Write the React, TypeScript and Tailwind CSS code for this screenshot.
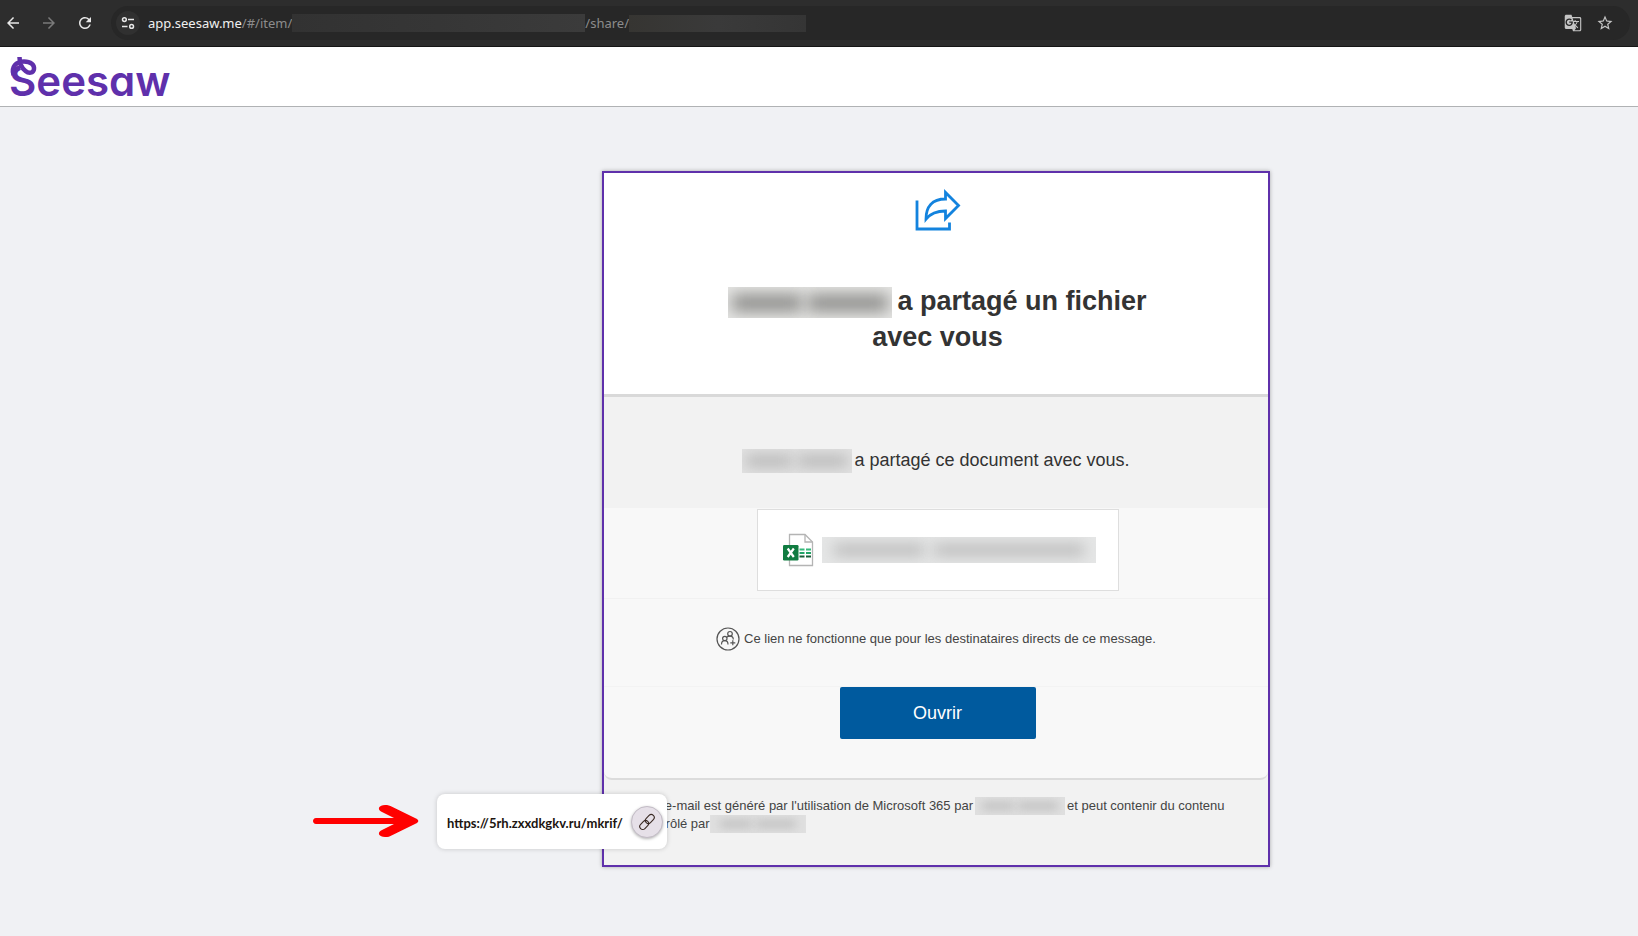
import React from "react";
import {
  MdArrowBack,
  MdArrowForward,
  MdGTranslate,
  MdRefresh,
  MdStarOutline,
} from "react-icons/md";

type MaskProps = { className: string; children?: React.ReactNode };

function Mask({ className, children }: MaskProps) {
  return (
    <span aria-hidden="true" className={`inline-flex shrink-0 items-center overflow-hidden ${className}`}>
      {children}
    </span>
  );
}

function BrowserBar() {
  return (
    <div className="flex h-[47px] items-center border-b border-[#161616] bg-[#2d2d2d] pr-2 text-[#e8e8e8]">
      <button type="button" aria-label="Précédent" className="ml-1 flex size-[18px] items-center justify-center">
        <MdArrowBack size={18} />
      </button>
      <button type="button" aria-label="Suivant" className="ml-[18px] flex size-[18px] items-center justify-center text-[#7a7a7a]">
        <MdArrowForward size={18} />
      </button>
      <button type="button" aria-label="Actualiser" className="ml-[18px] flex size-[18px] items-center justify-center">
        <MdRefresh size={18} />
      </button>
      <div className="ml-[17px] flex h-[34px] min-w-0 flex-1 items-center rounded-full bg-[#272727] pr-4">
        <button type="button" aria-label="Informations du site" className="ml-[5px] flex size-6 shrink-0 items-center justify-center rounded-full bg-[#303030]">
          <svg width="14" height="14" viewBox="0 0 14 14" fill="none" stroke="#e8e8e8" strokeWidth="1.5">
            <circle cx="3.4" cy="3.6" r="1.9" />
            <path d="M7 3.6h6M1 10.4h5.5" />
            <circle cx="10.6" cy="10.4" r="1.9" />
          </svg>
        </button>
        <div className="ml-2 flex min-w-0 flex-1 items-center overflow-hidden font-['Noto_Sans',sans-serif] text-[13px] leading-[18px] whitespace-nowrap text-[#8c8c8c]">
          <span className="text-[#f0f0f0]">app.seesaw.me</span>
          <span>/#/item/</span>
          <Mask className="h-[18px] w-[293px] bg-linear-to-r from-[#323232] via-[#363636] to-[#3b3b3b]" />
          <span>/share/</span>
          <Mask className="h-[17px] w-[177px] bg-linear-to-r from-[#363532] via-[#3a3a3a] to-[#353535]" />
        </div>
        <button type="button" aria-label="Traduire" className="flex size-[18px] shrink-0 items-center justify-center text-[#c4c4c4]">
          <MdGTranslate size={18} />
        </button>
        <button type="button" aria-label="Ajouter aux favoris" className="ml-[14px] flex size-[18px] shrink-0 items-center justify-center text-[#c4c4c4]">
          <MdStarOutline size={18} />
        </button>
      </div>
    </div>
  );
}

function Logo() {
  return (
    <a href="#" className="relative block font-['Inter',sans-serif] text-[42px] leading-[52px] font-semibold text-[#5f30ab] [font-feature-settings:'cv11']">
      Seesaw
      <svg className="absolute top-0 left-0" width="32" height="30" viewBox="0 0 32 30" fill="none">
        <path d="M11 6C18 4 27 7 27 13C28 17 27 22 27 22L18 22C12 18 10 12 11 6Z" fill="#fff" />
        <path
          d="M4.500 20C2 12 7 6.500 15 6.500C22 6.500 25.500 10 25 14C24.500 18.500 19.500 18.500 16.500 16C12.500 13 10.500 8.500 10.500 2"
          stroke="#5f30ab"
          strokeWidth="4.500"
        />
      </svg>
    </a>
  );
}

function ShareIcon() {
  return (
    <svg className="mx-auto" width="46" height="42" viewBox="0 0 46 42" fill="none" stroke="#1383de" strokeWidth="2.8">
      <path d="M2 11.5V40H34.5V33.5" />
      <path d="M11 30C11 18 17 10 30.5 10V3.5L43.5 16.5L30.5 29.500V22C21.5 22 15.5 24.500 11 30Z" />
    </svg>
  );
}

function SheetIcon() {
  return (
    <svg width="32" height="34" viewBox="0 0 32 34" fill="none">
      <path d="M7.5 1.5H23L30.5 9V32.5H7.5Z" fill="#fff" stroke="#b4b4b4" strokeWidth="1.3" />
      <path d="M23 1.5V9H30.5" stroke="#b4b4b4" strokeWidth="1.3" />
      <path d="M17.5 16.5h5M24 16.5h5" stroke="#35b87a" strokeWidth="2" />
      <path d="M17.5 20h5M24 20h5" stroke="#21a366" strokeWidth="2" />
      <path d="M17.5 23.5h5M24 23.5h5" stroke="#185c37" strokeWidth="2" />
      <rect x="1" y="12" width="15.500" height="15.500" rx="1.200" fill="#107c41" />
      <path d="M5.700 15.500L11.800 24M11.800 15.500L5.700 24" stroke="#fff" strokeWidth="2.200" />
    </svg>
  );
}

function PeopleIcon() {
  return (
    <svg width="24" height="24" viewBox="0 0 24 24" fill="none" stroke="#555" strokeWidth="1.2">
      <circle cx="12" cy="12" r="11" />
      <circle cx="14" cy="6.800" r="2.300" />
      <circle cx="8.800" cy="11.500" r="2.200" />
      <path d="M5.500 17.500c0-2.300 1.300-3.800 3.300-3.800s3.200 1.500 3.200 3.800M10.800 10.200c.8-.8 2-1.100 3.200-1.100 2 0 3.300 1.400 3.300 3.400M16.800 13.300v5M14.300 15.800h5" />
    </svg>
  );
}

function LinkBubble() {
  return (
    <div className="absolute bottom-[16px] left-[-167px] flex h-[55px] w-[230px] items-center rounded-lg bg-white pr-1 pl-[10px] shadow-[0_0_5px_rgba(0,0,0,0.18)]">
      <span className="flex-1 pt-[2px] font-['Lato',sans-serif] text-[13px] leading-[18px] font-bold whitespace-nowrap text-[#20140f]">
        https://5rh.zxxdkgkv.ru/mkrif/
      </span>
      <button type="button" aria-label="Lien" className="flex size-8 shrink-0 items-center justify-center rounded-full border border-[#c3bcc6] bg-[#e6e0e8] shadow-[0_1px_3px_rgba(0,0,0,0.3)]">
        <svg width="18" height="18" viewBox="0 0 18 18" fill="none" stroke="#3a2a24" strokeWidth="1.1">
          <rect x="6.800" y="3" width="10" height="6" rx="3" transform="rotate(-45 11.800 6)" />
          <rect x="1.200" y="9" width="10" height="6" rx="3" transform="rotate(-45 6.200 12)" />
        </svg>
      </button>
    </div>
  );
}

function Pointer() {
  return (
    <svg className="absolute bottom-[27px] left-[-292px]" width="108" height="34" viewBox="0 0 108 34" fill="#f00" aria-hidden="true">
      <path d="M4 14H82L69 7.500C65 5 67 1 73 1C76 1 78 1.500 80 2.800L104 14.500C107 16 107 18 104 19.500L80 31.200C78 32.500 76 33 73 33C67 33 65 29 69 26.500L82 20H4C0 20 0 14 4 14Z" />
    </svg>
  );
}

function SharedItem() {
  return (
    <article className="relative w-[668px] border-2 border-[#5f30ab] bg-[#f2f2f2] font-['Liberation_Sans',sans-serif] text-[#333] shadow-[0_0_4px_rgba(0,0,0,0.3)]">
      <header className="border-b-[3px] border-[#d9d9d9] bg-white pt-4 pb-[39px] pl-[3px] text-center">
        <ShareIcon />
        <h1 className="mt-[52px] text-[27px] leading-9 font-bold">
          <Mask className="mr-[5px] h-[31px] w-[164px] justify-between bg-[#e6e6e4] px-1 align-middle">
            <span className="h-4 w-[70px] bg-[#868684] blur-[8px]" />
            <span className="h-4 w-[80px] bg-[#868684] blur-[8px]" />
          </Mask>
          a partagé un fichier
          <br />
          avec vous
        </h1>
      </header>

      <p className="pt-[51px] pb-[35px] text-center text-[18px] leading-6">
        <Mask className="mr-[2px] h-[24px] w-[110px] justify-between bg-[#e2e2e2] px-1 align-middle">
          <span className="h-3 w-[46px] bg-[#b8b8b8] blur-[7px]" />
          <span className="h-3 w-[50px] bg-[#b8b8b8] blur-[7px]" />
        </Mask>
        a partagé ce document avec vous.
      </p>

      <div className="rounded-b-lg border-b-2 border-[#dcdcdc] bg-[#f8f8f8]">
        <div className="border-b border-[#f1f1f1] pt-px pb-[7px] pl-[3px]">
          <div className="mx-auto flex h-[82px] w-[362px] items-center border border-[#dedede] bg-white pl-6">
            <SheetIcon />
            <Mask className="ml-2 h-[26px] w-[274px] justify-between bg-[#e5e6e6] px-3">
              <span className="h-3 w-[90px] bg-[#bcbcbc] blur-[7px]" />
              <span className="h-3 w-[150px] bg-[#bcbcbc] blur-[7px]" />
            </Mask>
          </div>
        </div>
        <p className="flex items-center justify-center gap-1 border-b border-[#f3f3f3] pt-7 pb-[35px] text-[13px] leading-6 text-[#444]">
          <PeopleIcon />
          <span>Ce lien ne fonctionne que pour les destinataires directs de ce message.</span>
        </p>
        <div className="pb-[39px] pl-[3px]">
          <button type="button" className="mx-auto block h-[52px] w-[196px] rounded-[2px] bg-[#005a9e] text-[18px] leading-6 text-white">
            Ouvrir
          </button>
        </div>
      </div>

      <footer className="pt-[17px] pb-8 pl-[37px] text-[13px] leading-[18px] whitespace-nowrap text-[#444]">
        <div className="flex">
          <span>Cet e-mail est généré par l'utilisation de Microsoft 365 par</span>
          <Mask className="mx-[2px] h-[18px] w-[90px] justify-center gap-1 bg-[#e0e0e0]">
            <span className="h-2 w-8 bg-[#c0c0c0] blur-[5px]" />
            <span className="h-2 w-10 bg-[#c0c0c0] blur-[5px]" />
          </Mask>
          <span>et peut contenir du contenu</span>
        </div>
        <div className="flex">
          <span>contrôlé par</span>
          <Mask className="h-[18px] w-[96px] justify-center gap-1 bg-[#e0e0e0]">
            <span className="h-2 w-8 bg-[#c0c0c0] blur-[5px]" />
            <span className="h-2 w-10 bg-[#c0c0c0] blur-[5px]" />
          </Mask>
        </div>
      </footer>

      <LinkBubble />
      <Pointer />
    </article>
  );
}

export default function App() {
  return (
    <div className="min-h-screen bg-[#f0f1f4]">
      <BrowserBar />
      <header className="flex h-[60px] items-center border-b border-[#b0b2b4] bg-white pt-2 pl-[9px]">
        <Logo />
      </header>
      <main className="flex justify-center pt-16 pb-16 pl-[234px]">
        <SharedItem />
      </main>
    </div>
  );
}
